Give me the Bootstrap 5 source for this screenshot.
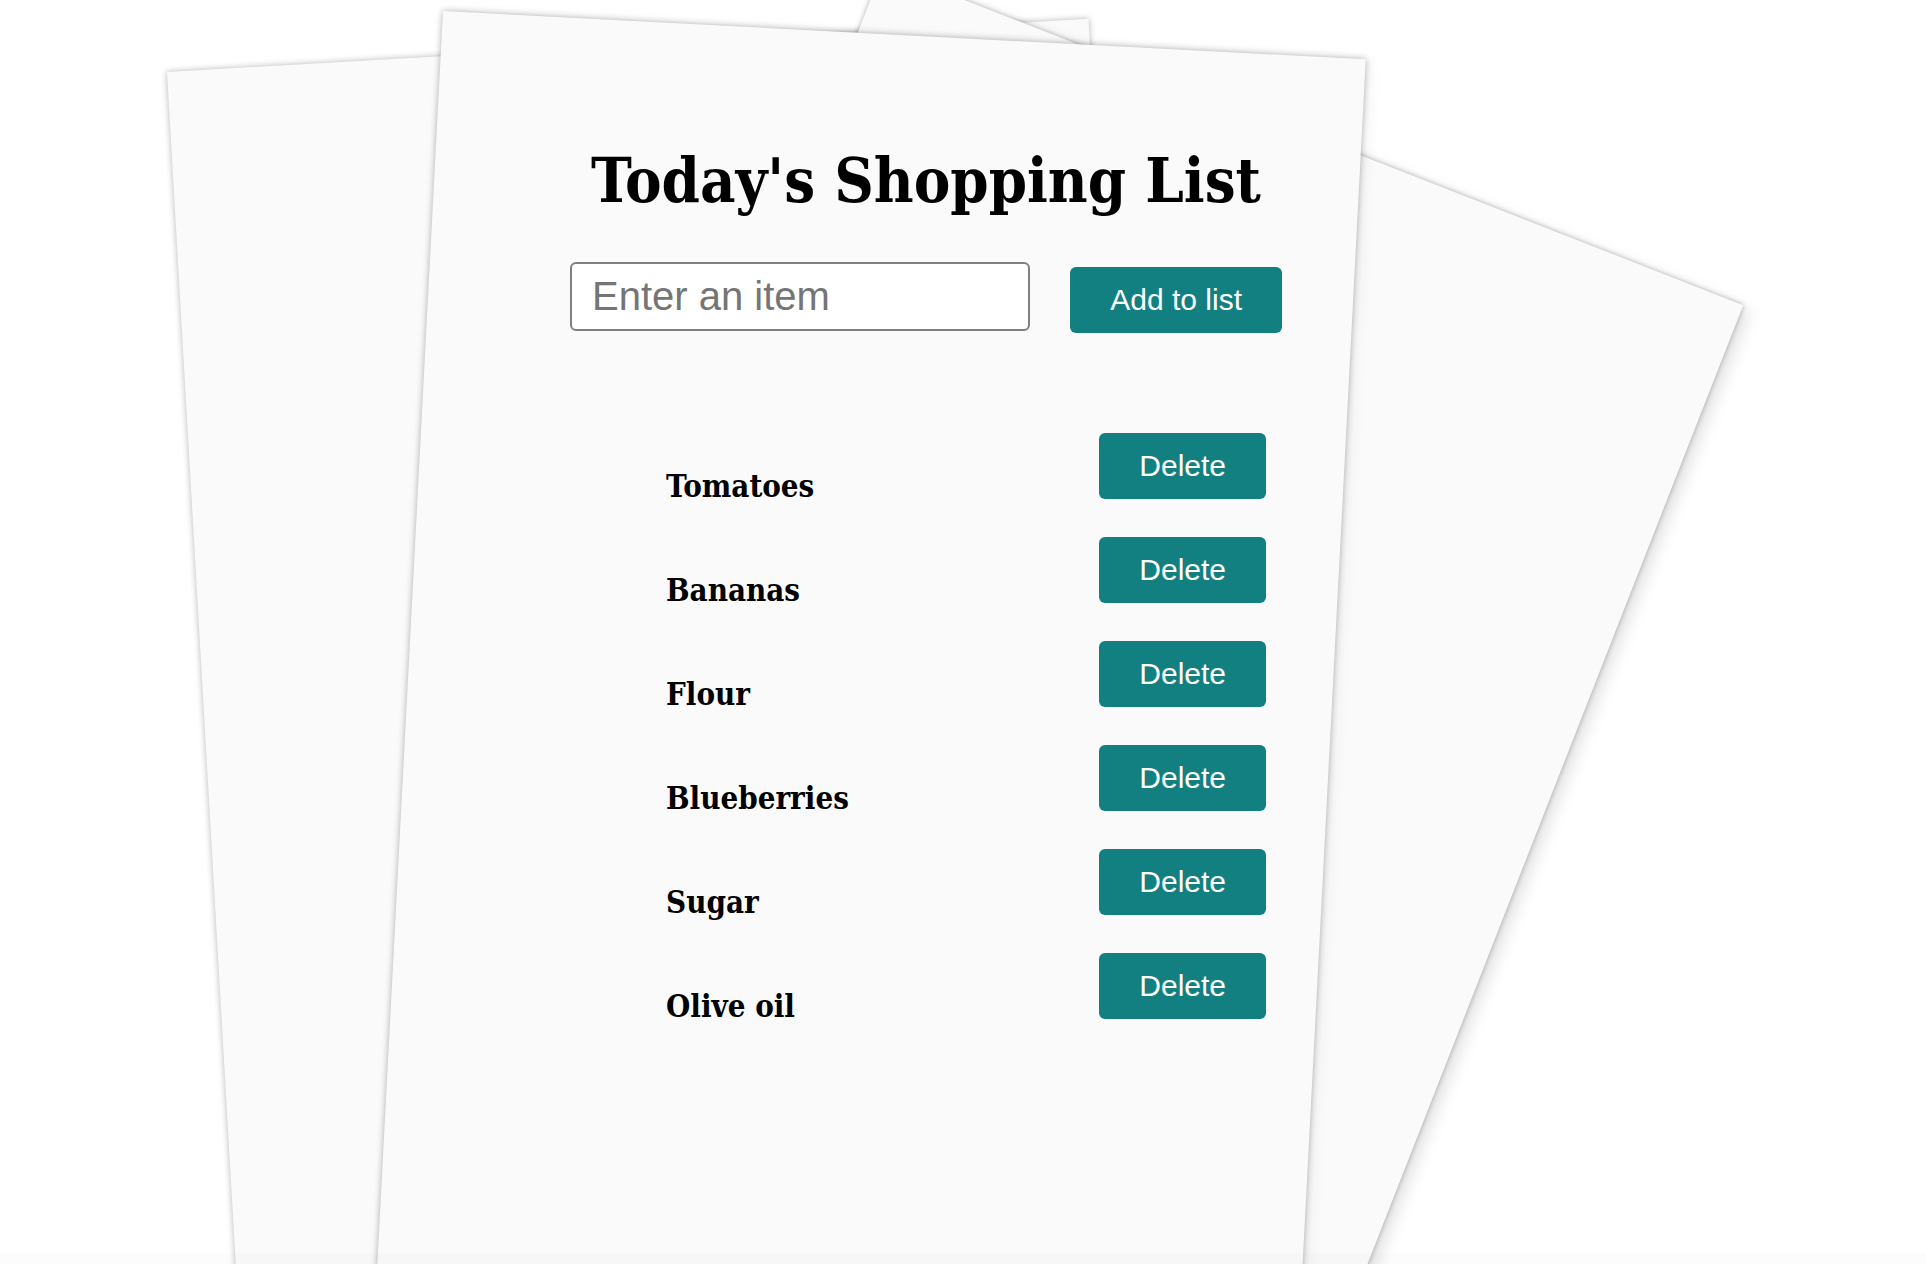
<!DOCTYPE html>
<html lang="en">
<head>
<meta charset="utf-8">
<meta name="viewport" content="width=device-width, initial-scale=1">
<title>Today's Shopping List</title>
<link href="https://cdn.jsdelivr.net/npm/bootstrap@5.3.0/dist/css/bootstrap.min.css" rel="stylesheet">
<style>
  body { background: #fff; color: #000; font-family: "Liberation Sans", Arial, sans-serif; }
  .desk { isolation: isolate; }

  /* Loose sheets of paper, each turned about its top left corner */
  .paper {
    position: absolute;
    z-index: -1;
    width: 924px;
    height: 200vh;
    background: #fafafa;
    transform-origin: 0 0;
    box-shadow: 0 0 6px rgba(0, 0, 0, .3);
  }
  .paper-left { top: 72px; left: calc(50% - 796px); width: 923px; transform: rotate(-3.3deg); }
  .paper-right {
    top: -32px; left: calc(50% - 80px); height: 1300px; transform: rotate(21.4deg);
    box-shadow: 0 0 5px rgba(0, 0, 0, .3), 8px 4px 16px rgba(0, 0, 0, .12);
  }
  .paper-front {
    top: 11px; left: calc(50% - 520px); transform: rotate(3deg);
    box-shadow: 0 0 6px rgba(0, 0, 0, .3), 4px 2px 16px rgba(60, 0, 20, .06);
  }

  .planner { max-width: 786px; padding: 140px 74px 80px 0; }
  .slab { font-family: "DejaVu Serif Condensed", "DejaVu Serif", serif; font-weight: 700; }
  .planner-title { font-size: 61px; line-height: 82px; margin-bottom: 40px; }

  .entry-box {
    height: 69px;
    margin-bottom: 2px;
    padding: 0 20px;
    font-size: 40px;
    border: 2px solid #808080;
    border-radius: 6px;
  }
  .entry-box::placeholder { color: #757575; }
  .btn-teal {
    --bs-btn-color: #fff;
    --bs-btn-bg: #128080;
    --bs-btn-hover-color: #fff;
    --bs-btn-hover-bg: #0d6b6b;
    --bs-btn-active-color: #fff;
    --bs-btn-active-bg: #0b5c5c;
    --bs-btn-border-width: 0;
    --bs-btn-border-radius: 6px;
    --bs-btn-padding-x: 40px;
    --bs-btn-padding-y: 15px;
    --bs-btn-font-size: 30px;
    --bs-btn-line-height: 36px;
    white-space: nowrap;
  }
  .entry-row { gap: 40px; margin-bottom: 100px; }
  .groceries { gap: 38px; padding: 0 16px 0 96px; }
  .grocery-name { font-size: 31px; line-height: 26px; }

  .desk-edge { position: absolute; inset: auto 0 0; height: 11px; background: rgba(0, 0, 0, .01); }
</style>
<script src="https://cdn.jsdelivr.net/npm/bootstrap@5.3.0/dist/js/bootstrap.bundle.min.js" defer></script>
</head>
<body>
<div class="desk position-relative min-vh-100 overflow-hidden">
  <div class="paper paper-left"></div>
  <div class="paper paper-right"></div>
  <div class="paper paper-front"></div>

  <main class="planner mx-auto">
    <h1 class="planner-title slab text-center text-nowrap">Today's Shopping List</h1>

    <form class="entry-row d-flex align-items-end" onsubmit="return false">
      <input class="entry-box form-control" id="item" type="text" placeholder="Enter an item" aria-label="Enter an item">
      <button class="btn btn-teal" type="submit">Add to list</button>
    </form>

    <ul class="groceries list-unstyled d-flex flex-column mb-0">
      <li class="d-flex justify-content-between align-items-end"><span class="grocery-name slab">Tomatoes</span><button class="btn btn-teal" type="button">Delete</button></li>
      <li class="d-flex justify-content-between align-items-end"><span class="grocery-name slab">Bananas</span><button class="btn btn-teal" type="button">Delete</button></li>
      <li class="d-flex justify-content-between align-items-end"><span class="grocery-name slab">Flour</span><button class="btn btn-teal" type="button">Delete</button></li>
      <li class="d-flex justify-content-between align-items-end"><span class="grocery-name slab">Blueberries</span><button class="btn btn-teal" type="button">Delete</button></li>
      <li class="d-flex justify-content-between align-items-end"><span class="grocery-name slab">Sugar</span><button class="btn btn-teal" type="button">Delete</button></li>
      <li class="d-flex justify-content-between align-items-end"><span class="grocery-name slab">Olive oil</span><button class="btn btn-teal" type="button">Delete</button></li>
    </ul>
  </main>
  <div class="desk-edge"></div>
</div>
</body>
</html>
